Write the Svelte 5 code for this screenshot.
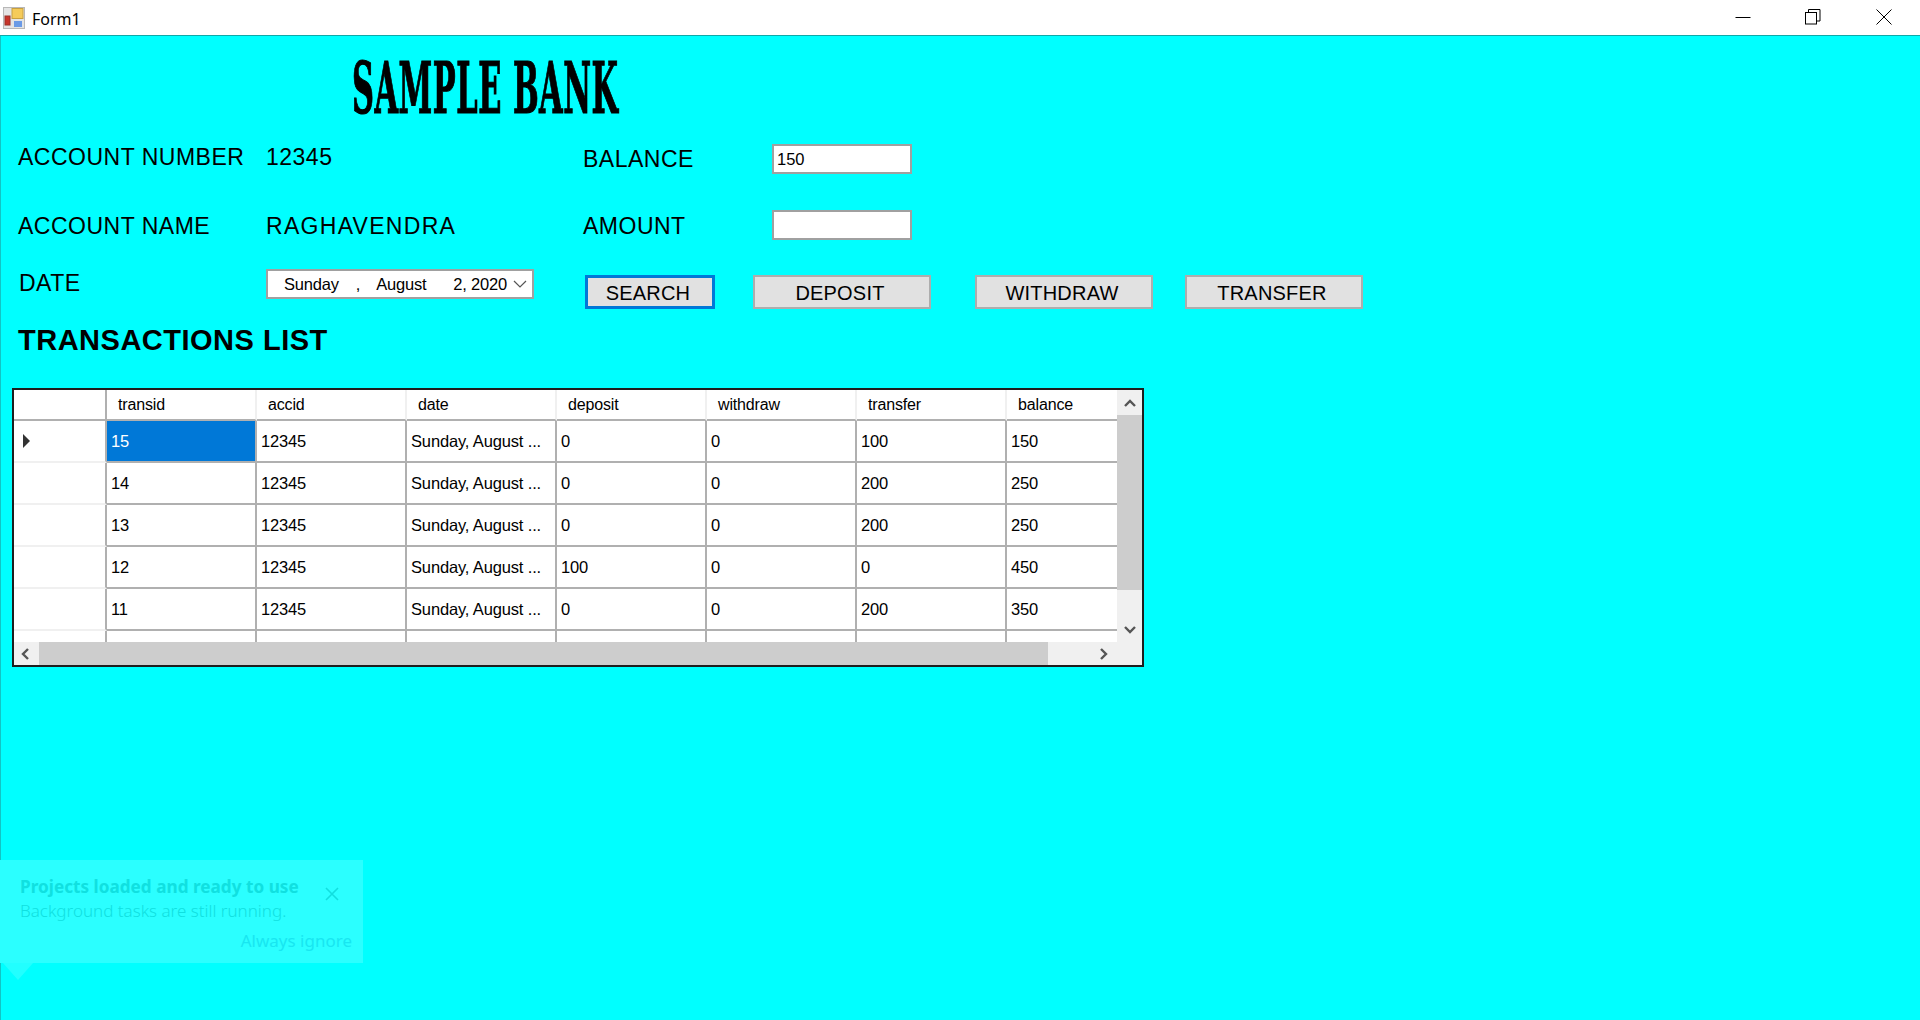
<script>
  const columns = ["transid", "accid", "date", "deposit", "withdraw", "transfer", "balance"];
  const longDate = "Sunday, August ...";
  const rows = [
    ["15", "12345", longDate, "0", "0", "100", "150"],
    ["14", "12345", longDate, "0", "0", "200", "250"],
    ["13", "12345", longDate, "0", "0", "200", "250"],
    ["12", "12345", longDate, "100", "0", "0", "450"],
    ["11", "12345", longDate, "0", "0", "200", "350"],
    ["", "", "", "", "", "", ""]
  ];
</script>

<div class="window">
  <header class="titlebar">
    <svg class="app-icon" width="22" height="22" viewBox="0 0 22 22">
      <rect x="0.5" y="0.5" width="21" height="21" fill="#e4e4e4" stroke="#b8b8b8" />
      <rect x="9" y="1.5" width="11" height="10" fill="#f5cb5a" stroke="#c8a040" />
      <rect x="2" y="9" width="5" height="9" fill="#c8342a" stroke="#9a3028" />
      <rect x="11" y="14" width="8" height="6" fill="#6a9ae6" />
    </svg>
    <span class="caption">Form1</span>
    <div class="controls">
      <svg width="16" height="16" viewBox="0 0 16 16"><path d="M0.5 8.5H15.5" stroke="#000" /></svg>
      <svg class="restore" width="16" height="16" viewBox="0 0 16 16" fill="none" stroke="#000">
        <rect x="0.5" y="3.5" width="11" height="11.5" />
        <path d="M3.5 3.5V0.5H15V12H11.5" />
      </svg>
      <svg width="16" height="16" viewBox="0 0 16 16"><path d="M0.5 0.5L15.5 15.5M15.5 0.5L0.5 15.5" stroke="#000" /></svg>
    </div>
  </header>

  <main class="form">
    <div class="brand"><h1>SAMPLE BANK</h1></div>

    <div class="fields">
      <span class="label raised">ACCOUNT NUMBER</span>
      <span class="label raised">12345</span>
      <div class="pair">
        <span class="label side">BALANCE</span>
        <div class="textbox">150</div>
      </div>

      <span class="label lowered">ACCOUNT NAME</span>
      <span class="label lowered wide">RAGHAVENDRA</span>
      <div class="pair">
        <span class="label side lowered">AMOUNT</span>
        <div class="textbox"></div>
      </div>

      <span class="label date-label">DATE</span>
      <div class="datepicker">
        <span class="sunday">Sunday</span>
        <span class="comma">,</span>
        <span class="month">August</span>
        <span>2, 2020</span>
        <svg width="14" height="8" viewBox="0 0 14 8" fill="none" stroke="#555" stroke-width="1.2"><path d="M1 1L7 7L13 1" /></svg>
      </div>
      <div class="actions">
        <button class="focused">SEARCH</button>
        <button class="deposit">DEPOSIT</button>
        <button class="withdraw">WITHDRAW</button>
        <button class="transfer">TRANSFER</button>
      </div>
    </div>

    <h2>TRANSACTIONS LIST</h2>

    <div class="datagrid">
      <div class="viewport">
        <div class="row head">
          <div class="rowhead"></div>
          {#each columns as col}
            <div class="cell">{col}</div>
          {/each}
        </div>
        {#each rows as row, r}
          <div class="row">
            <div class="rowhead">
              {#if r === 0}<span class="pointer"></span>{/if}
            </div>
            {#each row as value, c}
              <div class="cell" class:selected={r === 0 && c === 0}>{value}</div>
            {/each}
          </div>
        {/each}
      </div>
      <div class="vbar">
        <svg width="14" height="9" viewBox="0 0 14 9" fill="none" stroke="#555" stroke-width="2.4"><path d="M2 7L7 2L12 7" /></svg>
        <div class="vtrack"><div class="vthumb"></div></div>
        <svg width="14" height="9" viewBox="0 0 14 9" fill="none" stroke="#555" stroke-width="2.4"><path d="M2 2L7 7L12 2" /></svg>
      </div>
      <div class="hbar">
        <svg width="9" height="14" viewBox="0 0 9 14" fill="none" stroke="#555" stroke-width="2.4"><path d="M7 2L2 7L7 12" /></svg>
        <div class="htrack"><div class="hthumb"></div></div>
        <svg width="9" height="14" viewBox="0 0 9 14" fill="none" stroke="#555" stroke-width="2.4"><path d="M2 2L7 7L2 12" /></svg>
      </div>
      <div class="corner"></div>
    </div>

    <aside class="toast">
      <div class="toast-head">
        <strong>Projects loaded and ready to use</strong>
        <svg width="14" height="14" viewBox="0 0 14 14"><path d="M1 1L13 13M13 1L1 13" stroke="#12dede" stroke-width="1.6" /></svg>
      </div>
      <p>Background tasks are still running.</p>
      <a href="#ignore">Always ignore</a>
    </aside>
  </main>
</div>

<style>
  :global(body) {
    margin: 0;
    overflow: hidden;
  }

  .window {
    height: 1020px;
    display: flex;
    flex-direction: column;
    font-family: "Liberation Sans", Arial, sans-serif;
    color: #000;
  }

  .titlebar {
    height: 35px;
    background: #fff;
    border-bottom: 1px solid #12a8a8;
    display: flex;
    align-items: center;
    padding-left: 3px;
  }

  .app-icon {
    margin-right: 7px;
  }

  .caption {
    font-family: "Noto Sans", sans-serif;
    font-size: 16px;
    margin-top: 2px;
  }

  .controls {
    margin-left: auto;
    display: flex;
    gap: 54px;
    padding-right: 28px;
    margin-top: -2px;
  }

  .restore {
    margin-right: 1px;
  }

  .form {
    flex: 1;
    position: relative;
    background: #0ff;
    border-left: 1px solid #12c4c4;
    padding-left: 17px;
  }

  .brand {
    height: 90px;
    padding-left: 334px;
  }

  h1 {
    margin: 0;
    padding-top: 23px;
    width: max-content;
    font-family: "DejaVu Serif", serif;
    font-stretch: condensed;
    font-size: 71px;
    line-height: 58px;
    font-weight: 700;
    letter-spacing: 1px;
    transform: scaleX(0.477);
    transform-origin: left center;
    -webkit-text-stroke: 1.2px #000;
  }

  .fields {
    display: grid;
    grid-template-columns: 248px 318px 1fr;
    grid-template-rows: 66px 66px 68px;
    align-items: center;
  }

  .label {
    font-size: 23px;
    letter-spacing: 0.5px;
    white-space: nowrap;
  }

  .raised {
    margin-bottom: 3px;
  }

  .lowered {
    margin-top: 2px;
  }

  .wide {
    letter-spacing: 1.3px;
  }

  .pair {
    display: flex;
    align-items: center;
  }

  .side {
    width: 189px;
    flex: none;
    margin-left: -1px;
  }

  .textbox {
    height: 26px;
    background: #fff;
    border: 2px solid #a0a0a0;
    font-size: 16.5px;
    line-height: 26px;
    padding-left: 3px;
    width: 133px;
  }

  .date-label {
    padding-left: 1px;
    margin-bottom: 18px;
  }

  .datepicker {
    width: 264px;
    height: 26px;
    background: #fff;
    border: 2px solid #a0a0a0;
    display: flex;
    align-items: center;
    margin-bottom: 16px;
    font-size: 16.5px;
    letter-spacing: -0.2px;
    white-space: nowrap;
  }

  .sunday {
    margin-left: 16px;
  }

  .comma {
    margin-left: 17px;
  }

  .month {
    margin-left: 16px;
    margin-right: 27px;
  }

  .datepicker svg {
    margin-left: 6px;
  }

  .actions {
    display: flex;
    padding-left: 1px;
  }

  button {
    height: 34px;
    box-sizing: border-box;
    background: #e1e1e1;
    border: 2px solid #adadad;
    font-family: "Liberation Sans", Arial, sans-serif;
    font-size: 20px;
    letter-spacing: 0.2px;
    padding: 2px 4px 0 0;
    color: #000;
  }

  .focused {
    width: 130px;
    border: 3px solid #0078d7;
  }

  .deposit,
  .withdraw,
  .transfer {
    width: 178px;
  }

  .deposit {
    margin-left: 38px;
  }

  .withdraw {
    margin-left: 44px;
  }

  .transfer {
    margin-left: 32px;
  }

  h2 {
    margin: -2px 0 0;
    height: 64px;
    font-size: 29px;
    line-height: 32px;
    letter-spacing: 0.5px;
    font-weight: 700;
  }

  .datagrid {
    margin-left: -6px;
    width: 1128px;
    height: 275px;
    border: 2px solid #1e1e1e;
    background: #fff;
    display: grid;
    grid-template-columns: 1103px 25px;
    grid-template-rows: 252px 23px;
  }

  .viewport {
    overflow: hidden;
    font-size: 16.5px;
    letter-spacing: -0.15px;
  }

  .row {
    display: grid;
    grid-template-columns: 93px repeat(7, 150px);
    width: 1143px;
    height: 42px;
  }

  .head {
    height: 31px;
    font-size: 16px;
  }

  .rowhead {
    box-sizing: border-box;
    border-right: 2px solid #b0b0b0;
    border-bottom: 2px solid #f0f0f0;
    display: flex;
    align-items: center;
    padding-left: 9px;
  }

  .cell {
    box-sizing: border-box;
    border-right: 2px solid #b0b0b0;
    border-bottom: 2px solid #b0b0b0;
    padding-left: 4px;
    line-height: 40px;
    white-space: nowrap;
    overflow: hidden;
  }

  .head .rowhead {
    border-bottom: 2px solid #b0b0b0;
  }

  .head .cell {
    padding-left: 11px;
    line-height: 30px;
    border-right-color: #f0f0f0;
  }

  .selected {
    background: #0078d7;
    color: #fff;
  }

  .pointer {
    width: 0;
    height: 0;
    border-left: 7px solid #333;
    border-top: 7px solid transparent;
    border-bottom: 7px solid transparent;
  }

  .vbar {
    background: #f0f0f0;
    display: flex;
    flex-direction: column;
    align-items: center;
    padding: 9px 0 8px;
    box-sizing: border-box;
  }

  .vtrack {
    flex: 1;
    align-self: stretch;
    margin: 7px 0 0;
  }

  .vthumb {
    height: 175px;
    background: #cdcdcd;
  }

  .hbar {
    background: #f0f0f0;
    display: flex;
    align-items: center;
    padding: 0 9px 0 7px;
    box-sizing: border-box;
  }

  .htrack {
    flex: 1;
    align-self: stretch;
    margin-left: 9px;
  }

  .hthumb {
    width: 1009px;
    height: 100%;
    background: #cdcdcd;
  }

  .corner {
    background: #f0f0f0;
  }

  .toast {
    position: absolute;
    left: -1px;
    top: 824px;
    width: 363px;
    height: 103px;
    box-sizing: border-box;
    background: #2bffff;
    padding: 15px 0 0 20px;
    font-family: "Noto Sans", sans-serif;
    color: #10e0e0;
    font-size: 17px;
  }

  .toast::after {
    content: "";
    position: absolute;
    left: 3px;
    top: 103px;
    border-left: 15px solid transparent;
    border-right: 15px solid transparent;
    border-top: 17px solid #22ffff;
  }

  .toast-head {
    display: flex;
    align-items: center;
    height: 22px;
  }

  .toast-head strong {
    font-size: 17.2px;
    white-space: nowrap;
    width: 305px;
    flex: none;
  }

  .toast-head svg {
    margin-top: 16px;
  }

  .toast p {
    margin: 3px 0 0;
    line-height: 22px;
    font-weight: 300;
  }

  .toast a {
    position: absolute;
    right: 11px;
    bottom: 11px;
    color: #18e6f0;
    text-decoration: none;
  }
</style>
